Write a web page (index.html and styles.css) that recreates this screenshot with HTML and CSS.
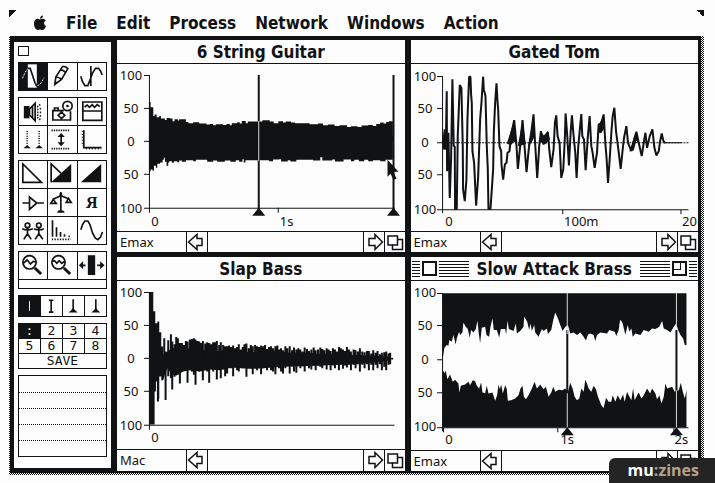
FILE: index.html
```html
<!DOCTYPE html>
<html lang="en">
<head>
<meta charset="utf-8">
<title>Sample Editor</title>
<link rel="stylesheet" href="styles.css">
</head>
<body>
<svg class="defs" aria-hidden="true">
  <symbol id="arrow-left" viewBox="0 0 20 20"><path d="M1.500 10 10 2.500v4h5v7h-5v4z"/></symbol>
  <symbol id="arrow-right" viewBox="0 0 20 20"><path d="M18.500 10 11 2.500v4H5v7h6v4z"/></symbol>
  <symbol id="resize" viewBox="0 0 20 20"><path d="M12.500 7.500h5v10h-10v-5"/><path d="M3 4h9.500v9H3z"/></symbol>
</svg>

<nav class="menubar" aria-label="Main menu">
  <button class="menu" aria-label="Apple"><svg class="apple" viewBox="0 0 14 16"><path d="M7 4.500C5 3.200 1 3.500 1 9c0 3 2 6 4 6 1 0 1.200-.5 2-.5s1.200.5 2.200.5C11 15 12.500 13 13 11c-2.500-1-2.500-4.500-.2-5.500C11.500 3.500 9 3.500 7 4.500zM7 3.700C7 2 8.200.6 10 .5 10 2.300 8.800 3.600 7 3.700z"/></svg></button>
  <button class="menu">File</button>
  <button class="menu">Edit</button>
  <button class="menu">Process</button>
  <button class="menu">Network</button>
  <button class="menu">Windows</button>
  <button class="menu">Action</button>
</nav>

<main class="desktop">
  <aside class="palette" aria-label="Tools">
    <button class="palette-close" aria-label="Close palette"></button>

    <div class="tools">
      <button class="tool selected" aria-label="Select"><svg viewBox="57 188 84 81"><path class="paper" d="M83 192h27v70H83z"/><path class="light" stroke-dasharray="6 4" d="M67 234l8-18 8-11M112 256l8-4 12-20"/><path d="M83 204h7l8 24 6 18 6 12"/></svg></button>
      <button class="tool" aria-label="Pencil"><svg viewBox="143 188 84 81"><path d="M163 252l3-22 20-31q10-2 16 6l-19 32zM166 230q10 0 17 7M179 208q10 1 16 8"/><path class="ink" d="M162 253l2-12 8 6z"/></svg></button>
      <button class="tool" aria-label="Splice"><svg viewBox="229 188 84 81"><path d="M267 197v60M237 228l4 14 8 14h9l7-18 7-20 9-14h9l6 8 5 12"/></svg></button>
    </div>

    <div class="tools">
      <button class="tool" aria-label="Play"><svg viewBox="57 293 84 81"><path class="ink" d="M71 317h17v37H71z"/><path d="M88 326l17-17v52l-17-17zM97 318v34"/><path stroke-dasharray="4 4" d="M111 320l12-10M111 328l14-4M111 336h14M111 344l14 4M111 351l12 9"/></svg></button>
      <button class="tool" aria-label="Snapshot"><svg viewBox="143 293 84 81"><path d="M190 331h-33v28h53v-26M162 330v-7h11v7M183 335l10 10-10 10-10-10z"/><circle cx="201" cy="317" r="14"/><circle class="ink" cx="201" cy="317" r="4"/></svg></button>
      <button class="tool" aria-label="Window view"><svg viewBox="229 293 84 81"><path d="M243 305h57v55h-57zM243 332h57M248 320l8-6 7 7 8-8 7 8 8-8 8 6"/></svg></button>
      <button class="tool" aria-label="Set markers"><svg viewBox="57 378 84 81"><path stroke-dasharray="3 4" d="M81 393v42M117 393v42"/><path class="ink" d="M70 445l11-10 11 10zM106 445l11-10 11 10z"/></svg></button>
      <button class="tool" aria-label="Fit height"><svg viewBox="143 378 84 81"><path stroke-dasharray="4 3" d="M153 391h56M153 446h56"/><path d="M182 405v28"/><path class="ink" d="M171 411l11-12 11 12zM171 427l11 12 11-12z"/></svg></button>
      <button class="tool" aria-label="Axes"><svg viewBox="229 378 84 81"><path d="M246 391v52h53"/><path stroke-dasharray="3 6" d="M242 392v46M252 446h46"/></svg></button>
    </div>

    <div class="tools">
      <button class="tool" aria-label="Fade out"><svg viewBox="57 35 84 81"><path d="M68 44v55h56z"/></svg></button>
      <button class="tool" aria-label="Crossfade"><svg viewBox="143 35 84 81"><path class="ink" d="M152 99l60-55v55z"/><path d="M152 99V44l30 28"/></svg></button>
      <button class="tool" aria-label="Fade in"><svg viewBox="229 35 84 81"><path class="ink" d="M237 99l61-55v55z"/></svg></button>
      <button class="tool" aria-label="Gain"><svg viewBox="57 119 84 81"><path d="M67 161h21M88 143v37l22-19zM110 161h21"/></svg></button>
      <button class="tool" aria-label="Balance"><svg viewBox="143 119 84 81"><path d="M181 128v55M158 150l23-11 23 9M158 150l-7 12h16zM204 147l-7 12h15z"/><path class="ink" d="M170 190q1-7 11-8 10 1 12 8zM177 131h8v10h-8z"/></svg></button>
      <button class="tool letter" aria-label="Reverse">Я</button>
      <button class="tool" aria-label="Duplicate"><svg viewBox="57 204 84 81"><circle cx="82" cy="229" r="7"/><circle cx="116" cy="229" r="7"/><path d="M66 239l8 3h16l8-3M82 236v18l-11 17M82 254l11 17M101 239l8 3h16l6-3M116 236v18l-11 17M116 254l12 17"/></svg></button>
      <button class="tool" aria-label="Spectrum"><svg viewBox="143 204 84 81"><path d="M156 214v49M168 235v28M180 249v14M192 256v7"/><path stroke-dasharray="4 4" d="M154 271h57M204 262h8"/></svg></button>
      <button class="tool" aria-label="Synthesize"><svg viewBox="229 204 84 81"><path d="M237 242l5-15 7-11h9l6 10 8 26 8 15 8 5 8-8 6-15"/></svg></button>
    </div>

    <div class="tools zoomers">
      <button class="tool" aria-label="Zoom in"><svg viewBox="57 309 84 81"><circle cx="88" cy="340" r="20"/><path d="M69 343l12-10 10 12 8-8 8 2"/><path class="thick" d="M104 357l19 18"/></svg></button>
      <button class="tool" aria-label="Zoom out"><svg viewBox="143 309 84 81"><circle cx="174" cy="340" r="20"/><path d="M155 337l7-2 7 8 7-8 8 8 9-7"/><path class="thick" d="M190 357l19 18"/></svg></button>
      <button class="tool" aria-label="Zoom range"><svg viewBox="229 309 84 81"><path class="ink" d="M258 319h22v59h-22zM231 349l13-12v24zM308 349l-13-12v24z"/><path d="M240 349h11M286 349h12"/></svg></button>
      <output class="readout"></output>
    </div>

    <div class="tools four">
      <button class="tool selected" aria-label="Cursor"><svg viewBox="57 50 62 62"><path class="light" d="M88 66v30"/></svg></button>
      <button class="tool" aria-label="Insert cursor"><svg viewBox="123 50 62 62"><path d="M146 63h14M146 100h14M153 63v37"/></svg></button>
      <button class="tool" aria-label="Start marker"><svg viewBox="187 50 62 62"><path d="M217 60v30"/><path class="ink" d="M203 101q10-6 14-15 4 9 14 15z"/></svg></button>
      <button class="tool" aria-label="End marker"><svg viewBox="251 50 62 62"><path d="M283 60v30"/><path class="ink" d="M269 101q10-6 14-15 4 9 14 15z"/></svg></button>
    </div>

    <div class="tools four presets">
      <button class="tool selected">:</button>
      <button class="tool">2</button>
      <button class="tool">3</button>
      <button class="tool">4</button>
      <button class="tool">5</button>
      <button class="tool">6</button>
      <button class="tool">7</button>
      <button class="tool">8</button>
      <button class="tool save">SAVE</button>
    </div>

    <div class="notes"><i></i><i></i><i></i><i></i><i></i></div>
  </aside>

  <section class="window">
    <header class="titlebar"><h2>6 String Guitar</h2></header>
    <svg class="plot" viewBox="117 64 288 167" role="img" aria-label="6 String Guitar waveform">
      <g class="labels"><text x="131" y="80">100</text><text x="131" y="113">50</text><text x="131" y="146">0</text><text x="131" y="179">50</text><text x="131" y="213">100</text><text x="155" y="226">0</text><text x="287" y="226">1s</text></g>
      <g transform="translate(110 36) scale(.33333)">
        <path class="ink" d="M117 320V198H122V214H130V240H134V236H140V244H148V240H153V248H165V252H170V246H180V248H188V256H194V250H204V254H208V250H228V258H236V262H250V259H268V263H290V266H300V264H310V268H318V265H340V267H350V264H360V268H366V262H382V259H390V263H396V255H408V262H414V257H458V253H480V257H492V262H506V256H520V260H528V257H544V260H556V262H600V265H625V263H640V268H655V266H675V270H690V268H712V273H724V271H744V273H756V269H776V267H790V270H800V264H812V260H822V263H830V258H838V256H850V320z"/>
        <path class="ink" d="M117 300V407H122V401H128V405H132V390H138V396H142V384H150V380H158V372H162V366H165V378H170V390H175V380H178V376H186V381H192V376H202V379H208V374H216V378H228V373H250V376H258V372H292V378H310V374H322V378H345V374H362V378H378V373H388V378H398V370H402V380H407V373H478V376H490V371H508V370H514V377H534V373H542V377H560V372H610V374H632V364H638V374H668V371H676V377H702V371H724V376H734V372H748V376H764V372H776V376H790V373H812V376H828V372H850V300z"/>
      </g>
      <path class="axis" d="M149.500 75v138M144 75.500h6M144 108.500h6M144 141.500h6M144 174.500h6M144 208.500h251M278.500 208v5"/>
      <path class="cursor" d="M259 75v137M394 75v137"/>
      <path class="cursor light" d="M259 121v40"/>
      <path class="ink" d="M252.500 216l6.500-8 6.500 8zM387.500 216l6.500-8 6.500 8zM388 160l11 12h-5l3 7-3 1-3-6-3 3z"/>
    </svg>
    <footer class="statusbar"><span class="source">Emax</span><button class="step" aria-label="Scroll left"><svg><use href="#arrow-left"/></svg></button><span class="track"></span><button class="step" aria-label="Scroll right"><svg><use href="#arrow-right"/></svg></button><button class="step" aria-label="Resize"><svg><use href="#resize"/></svg></button></footer>
  </section>

  <section class="window">
    <header class="titlebar"><h2>Gated Tom</h2></header>
    <svg class="plot" viewBox="411 64 287 167" role="img" aria-label="Gated Tom waveform">
      <g class="labels"><text x="425" y="81">100</text><text x="425" y="113">50</text><text x="425" y="147">0</text><text x="425" y="179">50</text><text x="425" y="214">100</text><text x="449" y="226">0</text><text x="581" y="226">100m</text><text x="689" y="226">20</text></g>
      <path class="dotted" d="M443 142.500h245"/>
      <path class="axis" d="M442.500 76v137M437 76.500h6M437 108.500h6M437 142.500h6M437 174.500h6M437 209.500h251M562.500 209v5M680.500 209v5M664 142.500h17"/>
      <g transform="translate(405 36) scale(.33333)">
        <path class="wave" d="M114 325L119 280 122 340 125 166 126 405 130 290 134 485 138 370 142 130 146 330 149 330 150 518H155L158 300 164 147 169 156 173 330 174 460 179 495 184 430 187 250 192 122H196L198 175 200 200 202 345 207 380 213 508 219 425 225 250 229 200 234 122 236 160 241 180 245 330 248 400 250 518H256L260 460 264 400 266 290 270 200 274 142 277 195 279 220 283 330 288 345 289 385 294 430 299 385 304 380 307 350 313 345 318 295 327 252 331 295 334 330 338 398 345 330 352 252 358 330 364 408 371 335 378 290 385 235 389 310 396 425 402 330 407 285 415 325 428 288 432 340 438 393 445 340 449 260 453 238 457 300 463 320 468 425 474 400 479 300 481 232 486 300 491 388 496 290 500 238 505 300 510 350 514 425 519 330 528 234 531 300 536 310 541 402 547 310 553 240 558 330 562 350 568 395 575 350 580 265 588 262 595 235 600 320 604 370 608 440 613 370 618 290 622 240 627 215 632 285 639 340 646 398 652 340 656 305 663 270 668 320 678 345 686 310 693 287 700 320 709 360 715 320 720 290 725 335 733 300 741 280 747 335 753 358 760 345 764 315 769 292 774 315 780 321"/>
        <path class="ink" d="M112 300h8l8 20-4 20h-10zM305 322l22-70 6 70-8-6-8 12zM338 330l14-78 10 72zM368 330l9-40 8-50 4 60-10 20zM402 316l6-28 8 10 12-14 6 26-14 14zM580 290l2-27 12-24 2 40-8 12zM672 345l14-40 7-18 8 40-8-14-8 30z"/>
      </g>
    </svg>
    <footer class="statusbar"><span class="source">Emax</span><button class="step" aria-label="Scroll left"><svg><use href="#arrow-left"/></svg></button><span class="track"></span><button class="step" aria-label="Scroll right"><svg><use href="#arrow-right"/></svg></button><button class="step" aria-label="Resize"><svg><use href="#resize"/></svg></button></footer>
  </section>

  <section class="window">
    <header class="titlebar"><h2>Slap Bass</h2></header>
    <svg class="plot" viewBox="117 281 288 168" role="img" aria-label="Slap Bass waveform">
      <g class="labels"><text x="131" y="297">100</text><text x="131" y="330">50</text><text x="131" y="363">0</text><text x="131" y="396">50</text><text x="131" y="430">100</text><text x="155" y="442">0</text></g>
      <path class="axis" d="M149.500 292v138M144 292.500h6M144 325.500h6M144 358.500h6M144 391.500h6M144 425.500h251"/>
      <g transform="translate(110 255) scale(.33333)">
        <path class="ink" d="M117 111H130V169H136V205H142V200H148V232H154V275H160V300L180 284 200 276 220 290 240 278 260 274 280 284 310 290 340 286 380 290 420 292 460 290 500 288 540 294 580 292 620 296 660 298 720 300 780 302 842 306V317L780 324 740 328 700 328 640 332 580 334 520 336 460 340 420 342 360 338 330 346 300 344 270 350 240 346 220 350 200 362 185 358 172 340 166 356 160 376H154V365H148V432H142V380H138V410H134V509H117z"/>
        <path class="spikes" d="M144 300V440M163 250V350M167 290V436M175 256V364M183 238V370M187 260V404M194 268V366M199 246V350M204 250V358M210 264V386M216 264V350M222 270V346M228 258V340M233 260V384M240 254V344M246 252V350M252 250V360M257 254V390M263 258V340M268 260V350M274 264V336M279 258V376M286 266V330M292 262V350M298 264V384M304 268V340M310 262V350M316 262V334M321 258V374M328 270V330M333 262V370M340 270V344M346 274V364M352 274V356M358 272V340M364 276V340M370 272V364M376 280V336M382 276V346M387 268V350M393 284V330M399 276V340M404 268V334M410 266V366M417 280V340M423 270V340M429 274V358M436 270V340M442 274V346M448 276V338M454 272V358M460 274V340M466 270V336M472 282V346M478 276V330M484 274V346M490 280V350M497 274V358M503 272V330M508 284V340M514 280V350M520 286V356M527 274V340M533 280V330M540 274V356M547 286V334M553 278V350M560 284V354M566 280V330M572 284V340M579 290V334M585 278V350M592 282V330M598 288V340M605 284V344M612 278V330M618 286V346M625 284V332M632 278V336M638 282V340M644 286V330M651 280V344M657 284V330M663 288V346M670 280V332M676 284V340M682 290V330M688 276V346M694 280V330M700 284V342M706 288V332M712 276V338M718 284V330M724 290V346M732 284V330M738 286V340M745 290V328M751 280V350M758 290V330M765 292V340M772 288V328M778 288V346M785 296V330M791 286V346M798 294V330M804 288V340M811 298V328M817 294V346M824 292V336M830 290V346M837 296V330M842 294V328"/>
        <path class="ink" d="M845 309h6v5h-6z"/>
      </g>
    </svg>
    <footer class="statusbar"><span class="source">Mac</span><button class="step" aria-label="Scroll left"><svg><use href="#arrow-left"/></svg></button><span class="track"></span><button class="step" aria-label="Scroll right"><svg><use href="#arrow-right"/></svg></button><button class="step" aria-label="Resize"><svg><use href="#resize"/></svg></button></footer>
  </section>

  <section class="window">
    <header class="titlebar active"><i class="stripes short"></i><button class="box" aria-label="Close"></button><i class="stripes"></i><h2>Slow Attack Brass</h2><i class="stripes"></i><button class="box zoom" aria-label="Zoom"></button><i class="stripes short"></i></header>
    <svg class="plot" viewBox="411 281 287 168" role="img" aria-label="Slow Attack Brass waveform">
      <g class="labels"><text x="425" y="297">100</text><text x="425" y="330">50</text><text x="425" y="364">0</text><text x="425" y="397">50</text><text x="425" y="431">100</text><text x="449" y="444">0</text><text x="567" y="444">1s</text><text x="681" y="444">2s</text></g>
      <g transform="translate(405 255) scale(.33333)">
        <path class="ink" d="M113 115H843V270H838L833 250 825 240 818 225 812 205 805 215 795 232 785 225 775 220 770 197 762 215 750 222 740 220 730 230 715 225 705 240 690 235 682 245 678 220 672 230 667 210 660 240 652 205 648 198 644 195 640 225 633 243 628 230 612 225 605 235 585 232 575 240 570 258 565 240 555 235 548 238 542 256 535 245 525 232 515 240 505 232 495 235 488 210 480 215 472 228 465 210 458 190 450 172 444 195 438 225 428 237 425 220 415 228 410 222 400 245 390 232 387 210 380 228 376 205 372 225 366 200 357 185 355 215 345 228 335 235 332 205 325 228 311 222 307 197 303 238 300 222 287 222 282 247 275 225 266 225 262 190 256 215 252 245 244 240 240 215 230 218 225 264 221 235 217 197 212 222 205 232 198 225 194 248 188 222 182 215 175 203 172 232 165 240 162 230 155 250 152 268 145 240 140 260 133 255 130 272 125 270 118 278 113 310z"/>
        <path class="ink" d="M113 517V345L119 354 122 346 127 372 135 358 143 380 150 374 160 385 163 412 167 392 180 388 190 380 195 390 203 375 210 378 215 392 222 400 228 382 232 412 240 414 245 392 250 415 262 412 270 437 276 420 280 388 284 402 288 388 293 415 300 390 305 402 308 437 318 435 330 430 340 420 346 400 352 392 356 425 362 432 370 420 380 400 388 380 395 400 405 388 415 402 422 395 430 425 438 412 444 395 450 410 460 404 472 405 480 400 488 410 495 383 502 400 508 425 515 435 522 430 528 400 535 410 540 374 545 385 550 400 558 410 565 392 572 402 578 425 588 450 595 458 602 428 610 440 618 440 622 420 630 440 637 420 645 435 653 418 658 440 665 410 670 420 678 435 683 400 688 435 693 425 700 412 708 430 715 420 725 400 734 415 740 400 750 415 755 432 762 420 768 445 775 425 780 385 785 400 800 395 808 410 820 405 826 383 832 410 838 430 843 405V517z"/>
      </g>
      <path class="axis" d="M442.500 293v138M437 293.500h6M437 325.500h6M437 359.500h6M437 392.500h6M437 427.500h251M443.500 427v5M557.500 427v5M673.500 427v5"/>
      <path class="cursor" d="M567 330v62M676 330v62"/>
      <path class="cursor light" d="M567 293v41M567 393v34M676 293v35M676 390v37"/>
      <path class="ink" d="M560.500 435l6.500-8 6.500 8zM669.500 435l6.500-8 6.500 8z"/>
    </svg>
    <footer class="statusbar"><span class="source">Emax</span><button class="step" aria-label="Scroll left"><svg><use href="#arrow-left"/></svg></button><span class="track"></span><button class="step" aria-label="Scroll right"><svg><use href="#arrow-right"/></svg></button><button class="step" aria-label="Resize"><svg><use href="#resize"/></svg></button></footer>
  </section>
</main>

<a class="badge" href="#"><span class="badge-lead">mu</span>:zines</a>
</body>
</html>
```
FILE: styles.css
```css
:root {
  --ink: #111214;
  --paper: #fdfdfd;
  --title-font: "DejaVu Sans Condensed", "DejaVu Sans", sans-serif;
  --label-font: "Noto Sans", sans-serif;
}

* {
  box-sizing: border-box;
}

body {
  margin: 0;
  position: relative;
  min-height: 100vh;
  background: var(--paper);
  color: var(--ink);
  font: 13px/16px var(--label-font);
}

button {
  margin: 0;
  padding: 0;
  border: 0;
  background: var(--paper);
  color: inherit;
  font: inherit;
}

svg {
  display: block;
}

.defs {
  position: absolute;
  width: 0;
  height: 0;
}

/* Menu bar */
.menubar {
  position: relative;
  display: flex;
  align-items: center;
  gap: 19px;
  height: 26px;
  margin: 10px 11px 0 9px;
  padding-left: 24px;
}

.menubar::before,
.menubar::after {
  content: "";
  position: absolute;
  top: 0;
  width: 7px;
  height: 7px;
}

.menubar::before {
  left: 0;
  background: linear-gradient(135deg, var(--ink) 50%, transparent 50%);
}

.menubar::after {
  right: 0;
  background: linear-gradient(225deg, var(--ink) 50%, transparent 50%);
}

.menu {
  font: bold 17px/20px var(--title-font);
}

.apple {
  width: 14px;
  height: 16px;
  fill: var(--ink);
}

/* Desktop with a dithered rim */
.desktop {
  display: grid;
  grid-template-columns: 97px 1fr 1fr;
  column-gap: 6px;
  row-gap: 5px;
  margin: 0 11px 0 9px;
  padding: 4px 6px 4px 5px;
  background:
    linear-gradient(var(--ink), var(--ink)) 1px 0 / calc(100% - 4px) calc(100% - 2px) no-repeat,
    repeating-conic-gradient(var(--ink) 0 25%, var(--paper) 0 50%) 0 0 / 2px 2px;
}

/* Tool palette */
.palette {
  grid-row: span 2;
  display: flex;
  flex-direction: column;
  gap: 6px;
  margin: 2px 0 3px;
  padding: 4px;
  background: var(--paper);
}

.palette-close {
  width: 11px;
  height: 10px;
  border: 1px solid var(--ink);
}

.tools {
  display: grid;
  grid-template-columns: repeat(3, 1fr);
  grid-auto-rows: 27px;
  gap: 1px;
  padding: 1px;
  background: var(--ink);
}

.zoomers {
  grid-template-rows: 27px 8px;
}

.readout {
  grid-column: 1 / -1;
  background: var(--paper);
}

.four {
  grid-template-columns: repeat(4, 1fr);
  grid-auto-rows: 20px;
}

.presets {
  grid-template-rows: 14px 14px 14px;
  font: 13px/14px "DejaVu Sans Mono", monospace;
}

.save {
  grid-column: 1 / -1;
}

.tool {
  overflow: hidden;
}

.tool svg {
  width: 100%;
  height: 100%;
}

.tool path,
.tool circle {
  fill: none;
  stroke: var(--ink);
  stroke-width: 5;
}

.tool .ink {
  fill: var(--ink);
  stroke: none;
}

.tool .paper {
  fill: var(--paper);
  stroke: none;
}

.tool .light {
  stroke: var(--paper);
  stroke-width: 3;
}

.tool .thick {
  stroke-width: 9;
}

.tool.selected {
  background: var(--ink);
  color: var(--paper);
}

.letter {
  font: bold 16px/20px "Liberation Serif", serif;
}

.notes {
  display: grid;
  grid-template-rows: repeat(5, 1fr);
  height: 82px;
  border: 1px solid var(--ink);
}

.notes i + i {
  border-top: 1px dotted var(--ink);
}

/* Waveform windows */
.window {
  display: flex;
  flex-direction: column;
  background: var(--paper);
}

.titlebar {
  display: flex;
  align-items: center;
  justify-content: center;
  height: 24px;
  border-bottom: 1px solid var(--ink);
}

.titlebar h2 {
  margin: 0;
  font: bold 17px/20px var(--title-font);
  white-space: nowrap;
}

.active {
  gap: 2px;
  padding: 0 1px;
}

.active h2 {
  padding: 0 6px;
}

.stripes {
  flex: 1;
  height: 16px;
  background: repeating-linear-gradient(var(--ink) 0 1px, transparent 1px 3px);
}

.stripes.short {
  flex: 0 0 8px;
}

.box {
  flex: none;
  width: 15px;
  height: 15px;
  border: 2px solid var(--ink);
}

.box.zoom {
  background:
    linear-gradient(var(--ink), var(--ink)) 6px 0 / 1px 7px no-repeat,
    linear-gradient(var(--ink), var(--ink)) 0 6px / 7px 1px no-repeat,
    var(--paper);
}

.plot {
  width: 100%;
  height: auto;
  overflow: hidden;
}

.labels {
  fill: var(--ink);
  font: 13px var(--label-font);
  text-anchor: middle;
}

.plot .ink {
  fill: var(--ink);
}

.axis {
  fill: none;
  stroke: var(--ink);
  stroke-width: 1;
}

.cursor {
  stroke: var(--ink);
  stroke-width: 2;
}

.cursor.light {
  stroke: #d8d8d4;
  stroke-width: 1;
}

.dotted {
  stroke: var(--ink);
  stroke-dasharray: 2 1;
}

.wave {
  fill: none;
  stroke: var(--ink);
  stroke-width: 6;
  stroke-linejoin: bevel;
}

.spikes {
  stroke: var(--ink);
  stroke-width: 6;
}

.statusbar {
  display: grid;
  grid-template-columns: 69px 21px 1fr 21px 21px;
  flex: 1;
  min-height: 21px;
  border-top: 1px solid var(--ink);
}

.source {
  padding-left: 3px;
  line-height: 20px;
}

.track {
  border-left: 1px solid var(--ink);
}

.step {
  border-left: 1px solid var(--ink);
}

.step svg {
  width: 20px;
  height: 20px;
  fill: none;
  stroke: var(--ink);
  stroke-width: 1.5;
}

/* Site badge over the corner */
.badge {
  position: absolute;
  right: 0;
  bottom: 0;
  padding: 0 16px 0 19px;
  border-top-left-radius: 6px;
  background: #242424;
  color: #b8a08c;
  font: bold 16px/25px "Open Sans", sans-serif;
  text-decoration: none;
}

.badge-lead {
  color: #fff;
}
```
